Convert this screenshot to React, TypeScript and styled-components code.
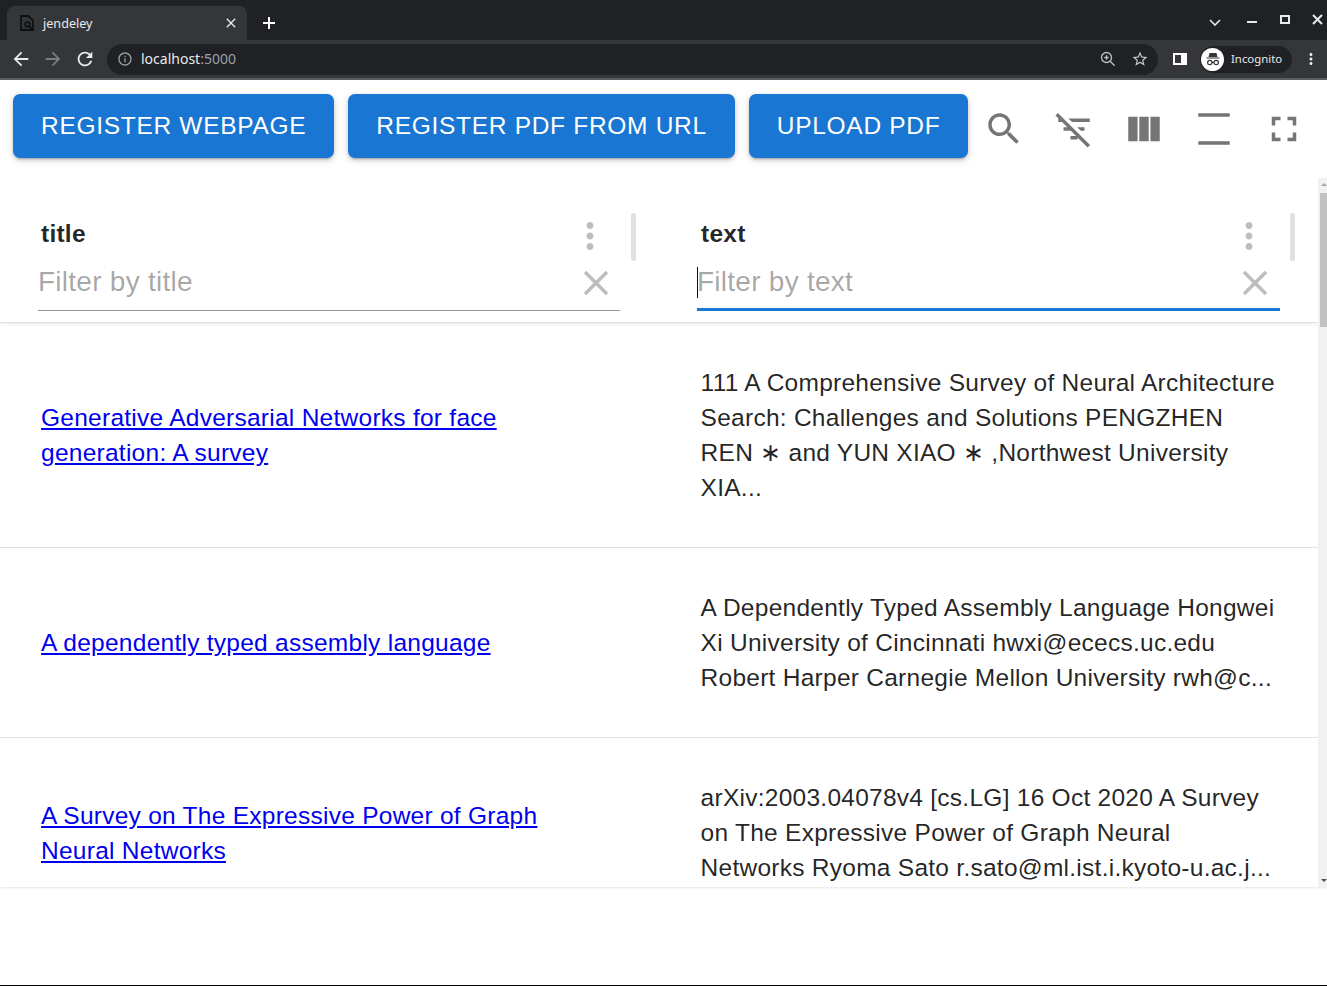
import React from "react";
import styled, { createGlobalStyle } from "styled-components";

const paths = {
  back: "M20 11H7.83l5.59-5.59L12 4l-8 8 8 8 1.41-1.41L7.83 13H20v-2z",
  forward: "M12 4l-1.41 1.41L16.17 11H4v2h12.17l-5.58 5.59L12 20l8-8z",
  reload:
    "M17.65 6.35C16.2 4.9 14.21 4 12 4c-4.42 0-7.99 3.58-7.99 8s3.57 8 7.99 8c3.73 0 6.84-2.55 7.73-6h-2.08c-.82 2.33-3.04 4-5.65 4-3.31 0-6-2.69-6-6s2.69-6 6-6c1.66 0 3.14.69 4.22 1.78L13 11h7V4l-2.35 2.35z",
  info: "M11 7h2v2h-2zm0 4h2v6h-2zm1-9C6.48 2 2 6.48 2 12s4.48 10 10 10 10-4.48 10-10S17.52 2 12 2zm0 18c-4.41 0-8-3.59-8-8s3.59-8 8-8 8 3.59 8 8-3.59 8-8 8z",
  star: "M22 9.24l-7.19-.62L12 2 9.19 8.63 2 9.24l5.46 4.73L5.82 21 12 17.27 18.18 21l-1.63-7.03L22 9.24zM12 15.4l-3.76 2.27 1-4.28-3.32-2.88 4.38-.38L12 6.1l1.71 4.04 4.38.38-3.32 2.88 1 4.28L12 15.4z",
  search:
    "M15.5 14h-.79l-.28-.27C15.41 12.59 16 11.11 16 9.5 16 5.91 13.09 3 9.5 3S3 5.91 3 9.5 5.91 16 9.5 16c1.61 0 3.09-.59 4.23-1.57l.27.28v.79l5 4.99L20.49 19l-4.99-5zm-6 0C7.01 14 5 11.99 5 9.5S7.01 5 9.5 5 14 7.01 14 9.5 11.99 14 9.5 14z",
  filterOff:
    "M10.83 8H21V6H8.83l2 2zm5 5H18v-2h-4.17l2 2zM14 16.83V18h-4v-2h3.17l-3-3H6v-2h2.17l-3-3H3V6h.17L1.39 4.22 2.8 2.81l18.38 18.38-1.41 1.41L14 16.83z",
  columns: "M14.67 5v14H9.33V5h5.34zm1 14H21V5h-5.33v14zm-7.34 0V5H3v14h5.33z",
  density: "M3 3h18v2H3zm0 16h18v2H3z",
  fullscreen:
    "M7 14H5v5h5v-2H7v-3zm-2-4h2V7h3V5H5v5zm12 7h-3v2h5v-5h-2v3zM14 5v2h3v3h2V5h-5z",
  more: "M12 8c1.1 0 2-.9 2-2s-.9-2-2-2-2 .9-2 2 .9 2 2 2zm0 2c-1.1 0-2 .9-2 2s.9 2 2 2 2-.9 2-2-.9-2-2-2zm0 6c-1.1 0-2 .9-2 2s.9 2 2 2 2-.9 2-2-.9-2-2-2z",
  close:
    "M19 6.41 17.59 5 12 10.59 6.41 5 5 6.41 10.59 12 5 17.59 6.41 19 12 13.41 17.59 19 19 17.59 13.41 12z",
};

const GlobalStyle = createGlobalStyle`
  html, body {
    margin: 0;
    padding: 0;
    background: #fff;
  }
  body {
    font-family: "Liberation Sans", Arial, sans-serif;
  }
`;

const Page = styled.div`
  width: 1327px;
  height: 986px;
  display: flex;
  flex-direction: column;
  overflow: hidden;
  border-bottom: 1px solid #000;
  box-sizing: border-box;
`;

const TabStrip = styled.div`
  height: 40px;
  flex: none;
  background: #202124;
  display: flex;
  align-items: flex-end;
  padding-left: 7px;
  color: #fff;
`;

const Tab = styled.div`
  width: 240px;
  height: 34px;
  box-sizing: border-box;
  padding: 0 8px 0 12px;
  background: #35363a;
  border-radius: 8px 8px 0 0;
  display: flex;
  align-items: center;
  gap: 8px;
`;

const TabTitle = styled.span`
  flex: 1;
  font: 12.6px "Noto Sans", sans-serif;
  color: #e8eaed;
`;

const NewTab = styled.div`
  width: 44px;
  height: 34px;
  display: flex;
  align-items: center;
  justify-content: center;
`;

const WindowControls = styled.div`
  margin-left: auto;
  height: 40px;
  display: flex;
  align-items: center;
`;

const WindowButton = styled.div<{ $w: number }>`
  width: ${(p) => p.$w}px;
  display: flex;
  justify-content: center;
  align-items: center;
`;

const Toolbar = styled.div`
  height: 40px;
  box-sizing: border-box;
  flex: none;
  background: #35363a;
  border-bottom: 2px solid #5c5d60;
  display: flex;
  align-items: center;
  padding-left: 5px;
`;

const NavButton = styled.div`
  width: 32px;
  height: 32px;
  flex: none;
  display: flex;
  align-items: center;
  justify-content: center;
`;

const Omnibox = styled.div`
  width: 1051px;
  height: 31px;
  margin: 0 6px;
  padding: 0 9px 0 10px;
  box-sizing: border-box;
  border-radius: 16px;
  background: #202124;
  display: flex;
  align-items: center;
  gap: 8px;
`;

const Url = styled.span`
  flex: 1;
  padding-bottom: 2px;
  font: 14px "Noto Sans", sans-serif;
  color: #e8eaed;
  & > span {
    color: #9aa0a6;
  }
`;

const OmniActions = styled.div`
  display: flex;
  align-items: center;
  gap: 14px;
`;

const ProfilePill = styled.div`
  width: 92px;
  height: 27px;
  flex: none;
  margin: 0 3px 0 4px;
  border-radius: 14px;
  background: #202124;
  display: flex;
  align-items: center;
  gap: 7px;
  padding-left: 1px;
  box-sizing: border-box;
  font: 11.4px "Noto Sans", sans-serif;
  color: #e8eaed;
`;

const ProfileLabel = styled.span`
  padding-bottom: 2px;
`;

const ProfileBadge = styled.div`
  width: 23px;
  height: 23px;
  border-radius: 50%;
  background: #fff;
  display: flex;
  align-items: center;
  justify-content: center;
`;

const ActionBar = styled.div`
  flex: none;
  display: flex;
  align-items: center;
  gap: 14px;
  padding: 14px 13px 20px;
`;

const ActionButton = styled.button`
  height: 64px;
  flex: none;
  white-space: nowrap;
  padding: 0 28px;
  border: 0;
  border-radius: 7px;
  background: #1976d2;
  color: #fff;
  font: 24.5px "Liberation Sans", Arial, sans-serif;
  letter-spacing: 0.7px;
  box-shadow: 0 3px 2px -2px rgba(0, 0, 0, 0.2), 0 2px 4px 0 rgba(0, 0, 0, 0.14),
    0 2px 8px 0 rgba(0, 0, 0, 0.12);
`;

const IconTools = styled.div`
  display: flex;
  flex: none;
  margin-left: -13px;
`;

const ToolButton = styled.div`
  width: 70px;
  height: 64px;
  box-sizing: border-box;
  padding-top: 5px;
  display: flex;
  align-items: center;
  justify-content: center;
`;

const Glyph = styled.svg<{ $size: number; $color: string }>`
  width: ${(p) => p.$size}px;
  height: ${(p) => p.$size}px;
  fill: ${(p) => p.$color};
  flex: none;
  display: block;
`;

const TableArea = styled.div`
  height: 709px;
  flex: none;
  display: flex;
  box-shadow: 0 1px 2px rgba(0, 0, 0, 0.1);
`;

const TableMain = styled.div`
  width: 1318px;
  overflow: hidden;
`;

const Columns = styled.div`
  display: grid;
  grid-template-columns: 659px 659px;
`;

const HeaderRow = styled(Columns)`
  border-bottom: 1px solid #e0e0e0;
  box-shadow: 0 2px 3px rgba(0, 0, 0, 0.06);
  position: relative;
`;

const HeadCell = styled.div`
  padding: 35px 23px 11px 38px;
`;

const TitleRow = styled.div`
  height: 48px;
  display: flex;
  align-items: center;
`;

const HeadTitle = styled.div<{ $second?: boolean }>`
  flex: 1;
  padding: 0 0 6px ${(p) => (p.$second ? 4 : 3)}px;
  font-size: 24.5px;
  font-weight: 700;
  letter-spacing: 0.25px;
  color: rgba(0, 0, 0, 0.87);
`;

const MenuSlot = styled.div`
  padding-bottom: 2px;
`;

const ClearSlot = styled.div`
  padding-top: 2px;
`;

const Handle = styled.div`
  width: 5px;
  height: 48px;
  margin-left: 20px;
  border-radius: 3px;
  background: #e0e0e0;
`;

const FilterField = styled.div<{ $focused?: boolean }>`
  position: relative;
  height: 53px;
  margin: -3px ${(p) => (p.$focused ? 15 : 16)}px 0 0;
  box-sizing: border-box;
  display: flex;
  align-items: center;
  padding: 0 ${(p) => (p.$focused ? 4 : 3)}px ${(p) => (p.$focused ? 2 : 4)}px 0;
  border-bottom: ${(p) =>
    p.$focused ? "3px solid #1976d2" : "1px solid #949494"};
`;

const FilterInput = styled.input`
  flex: 1;
  min-width: 0;
  height: 100%;
  border: 0;
  outline: 0;
  padding: 0;
  background: transparent;
  font: 28px "Liberation Sans", Arial, sans-serif;
  letter-spacing: 0.26px;
  &::placeholder {
    color: rgba(0, 0, 0, 0.36);
    opacity: 1;
  }
`;

const Caret = styled.div`
  position: absolute;
  left: 0;
  top: 9px;
  width: 1px;
  height: 31px;
  background: #111;
`;

const BodyRow = styled(Columns)`
  border-bottom: 1px solid #e0e0e0;
`;

const Cell = styled.div<{ $second?: boolean }>`
  padding: 42px 38px 42px ${(p) => (p.$second ? 41.6 : 41)}px;
  display: flex;
  align-items: center;
  font-size: 24.5px;
  line-height: 35px;
  letter-spacing: 0.26px;
  color: rgba(0, 0, 0, 0.87);
`;

const TitleCell = styled(Cell)`
  padding-right: 80px;
`;

const TitleLink = styled.a`
  color: #0000ee;
  text-decoration: underline;
`;

const ScrollTrack = styled.div`
  width: 9px;
  flex: none;
  background: #f1f1f1;
  display: flex;
  flex-direction: column;
  align-items: flex-end;
`;

const ScrollThumb = styled.div`
  width: 7px;
  height: 134px;
  margin-top: 7px;
  background: #c1c1c1;
`;

const ArrowUp = styled.div`
  margin-top: 5px;
  width: 0;
  height: 0;
  border-left: 3.5px solid transparent;
  border-right: 3.5px solid transparent;
  border-bottom: 3.5px solid #a3a3a3;
`;

const ArrowDown = styled.div`
  margin: auto 0 5px;
  width: 0;
  height: 0;
  border-left: 3.5px solid transparent;
  border-right: 3.5px solid transparent;
  border-top: 3.5px solid #505050;
`;

const Icon = ({
  d,
  size = 24,
  color = "#fff",
}: {
  d: string;
  size?: number;
  color?: string;
}) => (
  <Glyph viewBox="0 0 24 24" $size={size} $color={color}>
    <path d={d} />
  </Glyph>
);

const rows = [
  {
    title: "Generative Adversarial Networks for face generation: A survey",
    text: "111 A Comprehensive Survey of Neural Architecture Search: Challenges and Solutions PENGZHEN REN ∗ and YUN XIAO ∗ ,Northwest University XIA...",
  },
  {
    title: "A dependently typed assembly language",
    text: "A Dependently Typed Assembly Language Hongwei Xi University of Cincinnati hwxi@ececs.uc.edu Robert Harper Carnegie Mellon University rwh@c...",
  },
  {
    title: "A Survey on The Expressive Power of Graph Neural Networks",
    text: "arXiv:2003.04078v4 [cs.LG] 16 Oct 2020 A Survey on The Expressive Power of Graph Neural Networks Ryoma Sato r.sato@ml.ist.i.kyoto-u.ac.j...",
  },
];

function BrowserChrome() {
  return (
    <>
      <TabStrip>
        <Tab>
          <svg width="16" height="16" viewBox="0 0 16 16" fill="none" stroke="#0f1012" strokeWidth="1.8">
            <path d="M2 1h7.5L14 5.5V15H2z" />
            <circle cx="8.5" cy="9.5" r="2.3" />
            <path d="M10.2 11.2l2.6 2.6" />
          </svg>
          <TabTitle>jendeley</TabTitle>
          <Icon d={paths.close} size={16} color="#e8eaed" />
        </Tab>
        <NewTab>
          <svg width="14" height="14" viewBox="0 0 14 14" stroke="#fff" strokeWidth="2">
            <path d="M7 1v12M1 7h12" />
          </svg>
        </NewTab>
        <WindowControls>
          <WindowButton $w={52}>
            <svg width="12" height="12" viewBox="0 0 12 12" fill="none" stroke="#e8eaed" strokeWidth="1.6">
              <path d="M1 6l5 5 5-5" />
            </svg>
          </WindowButton>
          <WindowButton $w={22}>
            <svg width="11" height="10" viewBox="0 0 11 10" fill="#e8eaed">
              <rect x="0" y="6" width="10" height="2" />
            </svg>
          </WindowButton>
          <WindowButton $w={44}>
            <svg width="10" height="12" viewBox="0 0 10 12" fill="none" stroke="#e8eaed" strokeWidth="2">
              <rect x="1" y="2" width="8" height="7" />
            </svg>
          </WindowButton>
          <WindowButton $w={20}>
            <svg width="11" height="13" viewBox="0 0 11 13" stroke="#e8eaed" strokeWidth="2">
              <path d="M1 1l9 9M10 1l-9 9" />
            </svg>
          </WindowButton>
        </WindowControls>
      </TabStrip>
      <Toolbar>
        <NavButton>
          <Icon d={paths.back} size={22} color="#e8eaed" />
        </NavButton>
        <NavButton>
          <Icon d={paths.forward} size={22} color="#7b7c7f" />
        </NavButton>
        <NavButton>
          <Icon d={paths.reload} size={22} color="#e8eaed" />
        </NavButton>
        <Omnibox>
          <Icon d={paths.info} size={16} color="#9aa0a6" />
          <Url>
            localhost<span>:5000</span>
          </Url>
          <OmniActions>
            <svg width="18" height="18" viewBox="0 0 18 18" fill="none" stroke="#bdc1c6" strokeWidth="1.3">
              <circle cx="7.5" cy="7.5" r="5" />
              <path d="M11.2 11.2l4.5 4.5M5.3 7.5h4.4M7.5 5.3v4.4" />
            </svg>
            <Icon d={paths.star} size={18} color="#c4c7c5" />
          </OmniActions>
        </Omnibox>
        <NavButton>
          <svg width="14" height="14" viewBox="0 0 14 14">
            <path fill="#fff" d="M0 1h14v12H0z" />
            <path fill="#35363a" d="M2 3h6v8H2z" />
          </svg>
        </NavButton>
        <ProfilePill>
          <ProfileBadge>
            <svg width="18" height="18" viewBox="0 0 18 18" fill="none" stroke="#35363a" strokeWidth="1.2">
              <path fill="#35363a" stroke="none" d="M5.5 3h7l1 4h-9zM2.5 7.6h13v1h-13z" />
              <circle cx="5.8" cy="12.5" r="2.2" />
              <circle cx="12.2" cy="12.5" r="2.2" />
              <path d="M8 12.3h2" />
            </svg>
          </ProfileBadge>
          <ProfileLabel>Incognito</ProfileLabel>
        </ProfilePill>
        <NavButton>
          <Icon d={paths.more} size={18} color="#e8eaed" />
        </NavButton>
      </Toolbar>
    </>
  );
}

function ColumnHead({ name, second }: { name: string; second?: boolean }) {
  return (
    <HeadCell>
      <TitleRow>
        <HeadTitle $second={second}>{name}</HeadTitle>
        <MenuSlot>
          <Icon d={paths.more} size={42} color="#bdbdbd" />
        </MenuSlot>
        <Handle />
      </TitleRow>
      <FilterField $focused={second}>
        <FilterInput placeholder={`Filter by ${name}`} readOnly />
        {second && <Caret />}
        <ClearSlot>
          <Icon d={paths.close} size={42} color="#bdbdbd" />
        </ClearSlot>
      </FilterField>
    </HeadCell>
  );
}

export default function App() {
  return (
    <Page>
      <GlobalStyle />
      <BrowserChrome />
      <ActionBar>
        <ActionButton>REGISTER WEBPAGE</ActionButton>
        <ActionButton>REGISTER PDF FROM URL</ActionButton>
        <ActionButton>UPLOAD PDF</ActionButton>
        <IconTools>
          {[paths.search, paths.filterOff, paths.columns, paths.density, paths.fullscreen].map((d) => (
            <ToolButton key={d}>
              <Icon d={d} size={42} color="#757575" />
            </ToolButton>
          ))}
        </IconTools>
      </ActionBar>
      <TableArea>
        <TableMain>
          <HeaderRow>
            <ColumnHead name="title" />
            <ColumnHead name="text" second />
          </HeaderRow>
          {rows.map((r) => (
            <BodyRow key={r.title}>
              <TitleCell>
                <div>
                  <TitleLink href="#">{r.title}</TitleLink>
                </div>
              </TitleCell>
              <Cell $second>{r.text}</Cell>
            </BodyRow>
          ))}
        </TableMain>
        <ScrollTrack>
          <ArrowUp />
          <ScrollThumb />
          <ArrowDown />
        </ScrollTrack>
      </TableArea>
    </Page>
  );
}
